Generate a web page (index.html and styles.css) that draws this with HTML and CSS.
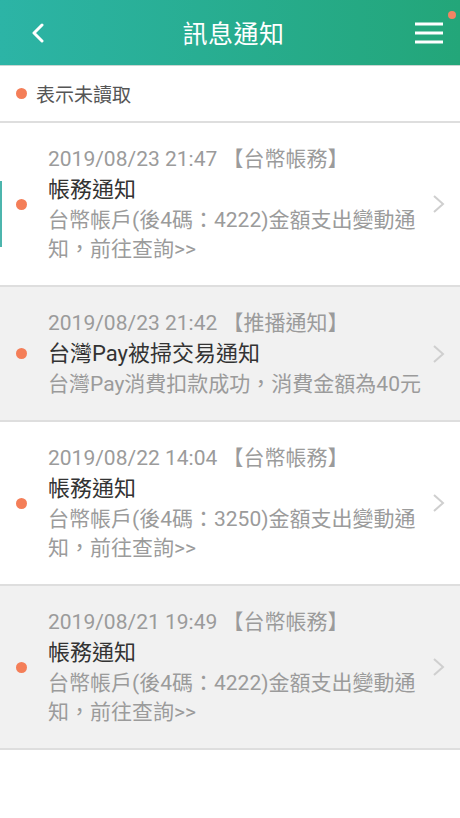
FILE: index.html
```html
<!DOCTYPE html>
<html lang="zh-Hant">
<head>
<meta charset="utf-8">
<link rel="stylesheet" href="styles.css">
</head>
<body>
<header class="topbar">
  <button class="icon-btn back" aria-label="返回">
    <svg width="14" height="20" viewBox="0 0 14 20"><path d="M11 2 L3 10 L11 18" fill="none" stroke="#fff" stroke-width="3" stroke-linecap="round" stroke-linejoin="round"/></svg>
  </button>
  <h1 class="title">訊息通知</h1>
  <button class="icon-btn menu" aria-label="選單">
    <svg width="30" height="22" viewBox="0 0 30 22"><path d="M1 2 H29 M1 11 H29 M1 20 H29" stroke="#fff" stroke-width="3"/></svg>
    <span class="badge"></span>
  </button>
</header>

<div class="legend"><span class="dot"></span>表示未讀取</div>

<ul class="list">
  <li class="item white first">
    <span class="dot"></span>
    <div class="body">
      <div class="date">2019/08/23 21:47 【台幣帳務】</div>
      <div class="subject">帳務通知</div>
      <div class="desc">台幣帳戶(後4碼：4222)金額支出變動通知，前往查詢&gt;&gt;</div>
    </div>
    <svg class="chev" width="14" height="20" viewBox="0 0 14 20"><path d="M2 2 L11 10 L2 18" fill="none" stroke="#cfcfcf" stroke-width="2"/></svg>
  </li>
  <li class="item grey">
    <span class="dot"></span>
    <div class="body">
      <div class="date">2019/08/23 21:42 【推播通知】</div>
      <div class="subject">台灣Pay被掃交易通知</div>
      <div class="desc">台灣Pay消費扣款成功，消費金額為40元</div>
    </div>
    <svg class="chev" width="14" height="20" viewBox="0 0 14 20"><path d="M2 2 L11 10 L2 18" fill="none" stroke="#cfcfcf" stroke-width="2"/></svg>
  </li>
  <li class="item white">
    <span class="dot"></span>
    <div class="body">
      <div class="date">2019/08/22 14:04 【台幣帳務】</div>
      <div class="subject">帳務通知</div>
      <div class="desc">台幣帳戶(後4碼：3250)金額支出變動通知，前往查詢&gt;&gt;</div>
    </div>
    <svg class="chev" width="14" height="20" viewBox="0 0 14 20"><path d="M2 2 L11 10 L2 18" fill="none" stroke="#cfcfcf" stroke-width="2"/></svg>
  </li>
  <li class="item grey">
    <span class="dot"></span>
    <div class="body">
      <div class="date">2019/08/21 19:49 【台幣帳務】</div>
      <div class="subject">帳務通知</div>
      <div class="desc">台幣帳戶(後4碼：4222)金額支出變動通知，前往查詢&gt;&gt;</div>
    </div>
    <svg class="chev" width="14" height="20" viewBox="0 0 14 20"><path d="M2 2 L11 10 L2 18" fill="none" stroke="#cfcfcf" stroke-width="2"/></svg>
  </li>
</ul>
</body>
</html>
```

FILE: styles.css
```css
* { box-sizing: border-box; }
html, body { margin: 0; padding: 0; }
body {
  width: 460px;
  min-height: 818px;
  background: #fff;
  font-family: Roboto, "Noto Sans CJK TC", sans-serif;
  overflow: hidden;
}
.topbar {
  height: 66px;
  display: grid;
  grid-template-columns: 1fr auto 1fr;
  align-items: center;
  padding: 0 16px 0 31px;
  background: linear-gradient(to right, #2cb4a6, #23a679);
  border-bottom: 1px solid #c9d6d2;
}
.icon-btn {
  background: none;
  border: 0;
  padding: 0;
  display: flex;
  align-items: center;
}
.back { justify-self: start; }
.title {
  margin: 0;
  font-family: "Noto Sans CJK TC", sans-serif;
  font-size: 25px;
  font-weight: 400;
  color: #fff;
  letter-spacing: 0.5px;
  line-height: 1;
  padding-right: 8px;
}
.menu { position: relative; justify-self: end; }
.badge {
  position: absolute;
  top: -11px;
  right: -12px;
  width: 8px;
  height: 8px;
  border-radius: 50%;
  background: #f28464;
}
.legend {
  height: 57px;
  display: flex;
  align-items: center;
  padding-left: 16px;
  font-family: "Noto Sans CJK TC", sans-serif;
  font-size: 19px;
  color: #555;
  border-bottom: 2px solid #dedede;
}
.legend .dot { margin-right: 9px; }
.dot {
  width: 11px;
  height: 11px;
  border-radius: 50%;
  background: #f47e58;
  flex: none;
}
.list { list-style: none; margin: 0; padding: 0; }
.item {
  display: flex;
  align-items: center;
  padding: 21px 14px 21px 16px;
  border-bottom: 2px solid #dedede;
  position: relative;
}
.item.white { background: #fff; }
.item.grey { background: #f1f1f1; }
.item.first::before {
  content: "";
  position: absolute;
  left: 0;
  top: 58px;
  width: 2px;
  height: 66px;
  background: #4cb5ad;
}
.item .dot { margin-right: 21px; }
.body { flex: 1; min-width: 0; }
.date {
  font-size: 21px;
  line-height: 30px;
  color: #9b9b9b;
  white-space: nowrap;
}
.subject {
  font-size: 22px;
  line-height: 32px;
  color: #333;
}
.desc {
  font-size: 21px;
  line-height: 29px;
  color: #9b9b9b;
  padding-right: 10px;
}
.chev { flex: none; }
```
